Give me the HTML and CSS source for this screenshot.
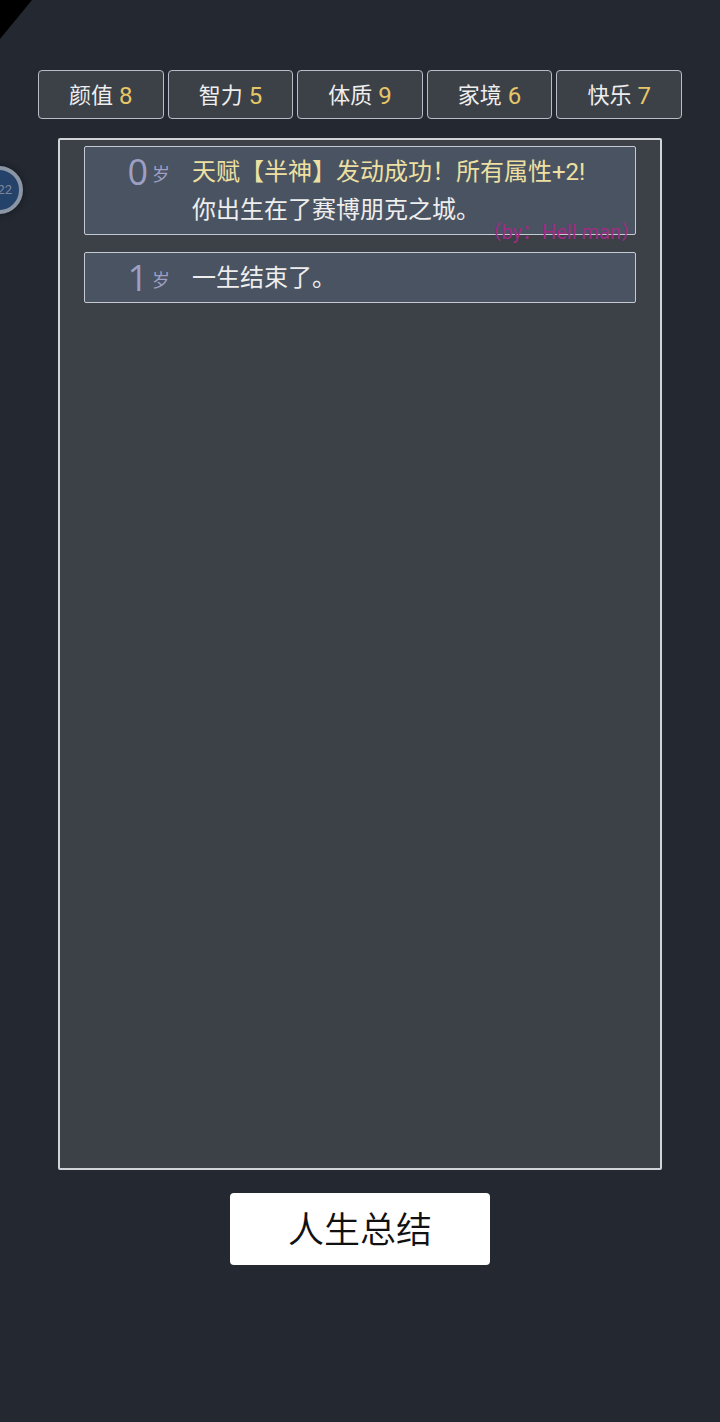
FILE: index.html
```html
<!DOCTYPE html>
<html lang="zh-CN">
<head>
    <meta charset="UTF-8">
    <meta name="viewport" content="width=device-width, initial-scale=1.0">
    <title>人生</title>
    <link rel="stylesheet" href="styles.css">
</head>
<body>
    <div class="corner"></div>
    <div class="float-ball">22</div>

    <main class="page">
        <!-- Attributes -->
        <ul class="stats">
            <li class="stat">颜值 <span class="stat-value">8</span></li>
            <li class="stat">智力 <span class="stat-value">5</span></li>
            <li class="stat">体质 <span class="stat-value">9</span></li>
            <li class="stat">家境 <span class="stat-value">6</span></li>
            <li class="stat">快乐 <span class="stat-value">7</span></li>
        </ul>

        <!-- Life log -->
        <section class="log">
            <article class="entry">
                <div class="age"><span class="age-number">0</span><span class="age-unit">岁</span></div>
                <div class="events">
                    <p class="talent">天赋【半神】发动成功！所有属性+2!</p>
                    <p>你出生在了赛博朋克之城。</p>
                </div>
                <span class="author">（by：Hell man）</span>
            </article>
            <article class="entry">
                <div class="age"><span class="age-number">1</span><span class="age-unit">岁</span></div>
                <div class="events">
                    <p>一生结束了。</p>
                </div>
            </article>
        </section>

        <button type="button" class="summary">人生总结</button>
    </main>
</body>
</html>
```
FILE: styles.css
```css
* {
    box-sizing: border-box;
}

body {
    margin: 0;
    background: #232831;
    color: #eeeeee;
    font-family: Roboto, "Noto Sans CJK SC", sans-serif;
    font-size: 24px;
    line-height: 38px;
}

.page {
    display: flex;
    flex-direction: column;
    min-height: 100vh;
    padding: 70px 38px 157px;
}

/* Attributes */
.stats {
    display: grid;
    grid-template-columns: repeat(5, 1fr);
    gap: 4px;
    margin: 0 0 19px;
    padding: 0;
    list-style: none;
}

.stat {
    display: flex;
    align-items: center;
    justify-content: center;
    gap: 6px;
    height: 49px;
    padding-top: 2px;
    border: 1px solid #b9bcc6;
    border-radius: 4px;
    background: #3c4047;
    font-size: 22px;
}

.stat-value {
    color: #e6c768;
    font-size: 24px;
}

/* Life log */
.log {
    display: flex;
    flex: 1;
    flex-direction: column;
    gap: 17px;
    margin: 0 20px 23px;
    padding: 6px 24px;
    border: 2px solid #d0d3d8;
    border-radius: 2px;
    background: #3c4047;
}

.entry {
    position: relative;
    display: flex;
    gap: 22px;
    padding: 6px 0 5px;
    border: 1px solid #c4c9d2;
    border-radius: 2px;
    background: #4a5361;
}

.age {
    display: flex;
    align-items: flex-start;
    justify-content: flex-end;
    gap: 4px;
    width: 85px;
    color: #9d9fc4;
}

.age-number {
    font-family: "Open Sans", sans-serif;
    font-size: 36px;
}

.age-unit {
    padding-top: 6px;
    font-size: 18px;
    line-height: 32px;
}

.events p {
    margin: 0;
}

.events .talent {
    color: #eee0a2;
}

.author {
    position: absolute;
    right: -6px;
    bottom: -17px;
    color: #a02a86;
    font-size: 20px;
}

/* Summary button */
.summary {
    align-self: center;
    width: 260px;
    height: 72px;
    padding: 0 0 4px;
    border: none;
    border-radius: 4px;
    background: #ffffff;
    color: #111111;
    font-family: "Noto Sans CJK SC DemiLight", "Noto Sans CJK SC", sans-serif;
    font-size: 36px;
    font-weight: 350;
    cursor: pointer;
}

/* Screen overlays */
.corner {
    position: absolute;
    top: 0;
    left: 0;
    width: 32px;
    height: 39px;
    background: #000000;
    clip-path: polygon(0 0, 100% 0, 0 100%);
}

.float-ball {
    position: absolute;
    top: 166px;
    left: -25px;
    width: 48px;
    height: 48px;
    padding-right: 7px;
    border: 4px solid #8b95a4;
    border-radius: 50%;
    background: #24426a;
    box-shadow: 0 0 6px #15181f;
    color: #7b8796;
    font-size: 13px;
    line-height: 40px;
    text-align: right;
}
```
